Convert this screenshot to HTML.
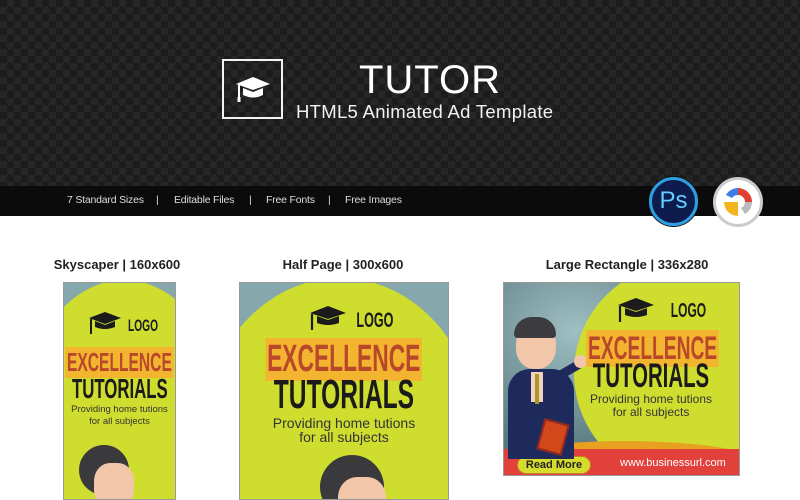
<!DOCTYPE html>
<html><head><meta charset="utf-8"><style>
*{margin:0;padding:0;box-sizing:border-box}
html,body{width:800px;height:500px;overflow:hidden}
body{background:#fff;font-family:"Liberation Sans",sans-serif;position:relative}
.abs{position:absolute}
.hdr{left:0;top:0;width:800px;height:186px;background-color:#1c1c1c;
background-image:linear-gradient(45deg,#262626 25%,transparent 25%,transparent 75%,#262626 75%),linear-gradient(45deg,#262626 25%,transparent 25%,transparent 75%,#262626 75%);
background-size:14px 14px;background-position:0 0,7px 7px}
.bar{left:0;top:186px;width:800px;height:30px;background:#0b0b0b}
.bar span{position:absolute;top:8px;color:#ddd;font-size:10.5px;white-space:nowrap;letter-spacing:-0.2px}
.lbl{top:257px;font-size:13px;font-weight:bold;color:#222;text-align:center;white-space:nowrap}
.t{position:absolute;text-align:center;white-space:nowrap;left:-100px;width:calc(100% + 200px)}
.c{font-weight:bold}
.c>span{display:inline-block;transform:scaleX(0.6);transform-origin:center}
.exc{color:#b9482b}
.exc>span{background:#f3b52f;padding:0 3px}
.tut{color:#1b1b1b}
.pr{color:#333}
</style></head><body>
<div class="abs hdr"></div>
<div class="abs" style="left:222px;top:59px;width:61px;height:60px;border:2px solid #f2f2f2"></div>
<svg class="abs" style="left:234px;top:74px" width="38" height="30" viewBox="0 0 38 30">
<path d="M19 3 L36 10 L19 16 L2 10 Z" fill="#fff"/><path d="M9 14 L9 21 Q19 26 29 21 L29 14 L19 18 Z" fill="#fff"/><path d="M5 11 L5 25" stroke="#fff" stroke-width="2"/><rect x="3.5" y="23" width="3" height="5" fill="#fff"/></svg>
<div class="abs" style="left:300px;top:58px;width:260px;text-align:center;color:#fff;font-size:40px;letter-spacing:1px">TUTOR</div>
<div class="abs" style="left:296px;top:101px;color:#f2f2f2;font-size:18.5px;white-space:nowrap;letter-spacing:0.3px">HTML5 Animated Ad Template</div>
<div class="abs bar"><span style="left:67px">7 Standard Sizes</span><span style="left:156px">|</span><span style="left:174px">Editable Files</span><span style="left:249px">|</span><span style="left:266px">Free Fonts</span><span style="left:328px">|</span><span style="left:345px">Free Images</span></div>
<div class="abs" style="left:649px;top:177px;width:49px;height:49px;border-radius:50%;background:#0e1b4d;border:3px solid #2e9fe0;box-shadow:0 0 0 1px #111;color:#5fd0ff;font-size:24px;line-height:42px;text-align:center">Ps</div>
<div class="abs" style="left:713px;top:177px;width:50px;height:50px;border-radius:50%;background:#fff;border:3px solid #ccc"></div>
<svg class="abs" style="left:721px;top:185px" width="34" height="34" viewBox="0 0 34 34">
<path d="M17 3 A14 14 0 0 1 31 17 L24 17 A7 7 0 0 0 17 10 Z" fill="#e04030"/>
<path d="M17 3 A14 14 0 0 0 5 10 L11 13 A7 7 0 0 1 17 10 Z" fill="#3a7ee8"/>
<path d="M3 17 L17 17 L17 31 A14 14 0 0 1 3 17 Z" fill="#f2b51e"/>
<path d="M31 17 A14 14 0 0 1 24 29 L20 23 A7 7 0 0 0 24 17 Z" fill="#bbb"/></svg>

<div class="abs lbl" style="left:17px;width:200px">Skyscaper | 160x600</div>
<div class="abs lbl" style="left:243px;width:200px">Half Page | 300x600</div>
<div class="abs lbl" style="left:527px;width:200px">Large Rectangle | 336x280</div>

<!-- skyscraper -->
<div class="abs" style="left:63px;top:282px;width:113px;height:218px;background:#86a7ac;border:1px solid #999;overflow:hidden">
<div class="abs" style="left:-45px;top:-3px;width:210px;height:300px;border-radius:50%;background:#cfdd2f"></div>
<svg class="abs" style="left:23px;top:28px" width="36" height="26" viewBox="0 0 36 26"><path d="M18 1 L34 7 L18 13 L2 7 Z" fill="#1b1b1b"/><path d="M8 10 L8 16 Q18 20 28 16 L28 10 L18 14 Z" fill="#1b1b1b"/><path d="M4 8 L4 23" stroke="#1b1b1b" stroke-width="2"/></svg>
<div class="abs c" style="left:54px;top:33px;font-size:17px;color:#1b1b1b"><span>LOGO</span></div>
<div class="t c exc" style="top:64px;font-size:26px"><span>EXCELLENCE</span></div>
<div class="t c tut" style="top:90px;font-size:28px"><span>TUTORIALS</span></div>
<div class="t pr" style="top:121px;font-size:9.5px;line-height:12px">Providing home tutions<br>for all subjects</div>
<div class="abs" style="left:15px;top:162px;width:50px;height:50px;border-radius:50%;background:#3a3a3c"></div>
<div class="abs" style="left:30px;top:180px;width:40px;height:45px;border-radius:40%;background:#f2c6a8"></div>
</div>

<!-- half page -->
<div class="abs" style="left:239px;top:282px;width:210px;height:218px;background:#86a7ac;border:1px solid #999;overflow:hidden">
<div class="abs" style="left:-40px;top:-5px;width:280px;height:330px;border-radius:50%;background:#cfdd2f"></div>
<svg class="abs" style="left:68px;top:22px" width="40" height="28" viewBox="0 0 40 28"><path d="M20 1 L38 8 L20 14 L2 8 Z" fill="#1b1b1b"/><path d="M9 11 L9 18 Q20 22 31 18 L31 11 L20 15 Z" fill="#1b1b1b"/><path d="M4 9 L4 25" stroke="#1b1b1b" stroke-width="2.2"/></svg>
<div class="abs c" style="left:104px;top:26px;font-size:21px;color:#1b1b1b"><span>LOGO</span></div>
<div class="t c exc" style="top:55px;font-size:38px"><span>EXCELLENCE</span></div>
<div class="t c tut" style="top:88px;font-size:41px"><span>TUTORIALS</span></div>
<div class="t pr" style="top:133px;font-size:14px;line-height:14px">Providing home tutions<br>for all subjects</div>
<div class="abs" style="left:80px;top:172px;width:64px;height:64px;border-radius:50%;background:#3a3a3c"></div>
<div class="abs" style="left:98px;top:194px;width:48px;height:50px;border-radius:40%;background:#f2c6a8"></div>
</div>

<!-- large rect -->
<div class="abs" style="left:503px;top:282px;width:237px;height:194px;background:radial-gradient(ellipse at 30% 25%,#9fbfc2,#4d6e74 70%,#3b5a60);border:1px solid #999;overflow:hidden">
<div class="abs" style="left:70px;top:-20px;width:220px;height:220px;border-radius:50%;background:#cfdd2f"></div>
<div class="abs" style="left:-20px;top:158px;width:280px;height:60px;background:#e8a020;border-radius:50% 50% 0 0/40% 40% 0 0"></div>
<div class="abs" style="left:0;top:166px;width:237px;height:30px;background:#e2403a"></div>
<div class="abs" style="left:13px;top:173px;width:74px;height:18px;border-radius:9px;background:#d6dc2c;border:1px solid #c9802a;font-size:11px;font-weight:bold;color:#222;text-align:center;line-height:16px">Read More</div>
<div class="abs" style="left:116px;top:174px;font-size:11px;color:#fff">www.businessurl.com</div>
<div class="abs" style="left:4px;top:86px;width:66px;height:90px;border-radius:22px 22px 0 0;background:#1f2a5c"></div>
<div class="abs" style="left:27px;top:89px;width:12px;height:30px;background:#f5d0c0"></div>
<div class="abs" style="left:31px;top:91px;width:4px;height:30px;background:#a89a20"></div>
<div class="abs" style="left:12px;top:40px;width:40px;height:46px;border-radius:45%;background:#f2c6a8"></div>
<div class="abs" style="left:10px;top:34px;width:42px;height:21px;border-radius:20px 20px 4px 4px;background:#3c3c40"></div>
<div class="abs" style="left:55px;top:82px;width:22px;height:9px;background:#1f2a5c;transform:rotate(-30deg)"></div>
<div class="abs" style="left:70px;top:72px;width:13px;height:13px;border-radius:50%;background:#f2c6a8"></div>
<div class="abs" style="left:36px;top:138px;width:26px;height:32px;background:#d5481c;transform:rotate(15deg);border:2px solid #8e2a20"></div>
<svg class="abs" style="left:112px;top:14px" width="40" height="28" viewBox="0 0 40 28"><path d="M20 1 L38 8 L20 14 L2 8 Z" fill="#1b1b1b"/><path d="M9 11 L9 18 Q20 22 31 18 L31 11 L20 15 Z" fill="#1b1b1b"/><path d="M4 9 L4 25" stroke="#1b1b1b" stroke-width="2.2"/></svg>
<div class="abs c" style="left:155px;top:17px;font-size:20px;color:#1b1b1b"><span>LOGO</span></div>
<div class="abs c exc" style="left:38px;top:47px;width:200px;text-align:center;font-size:32px;white-space:nowrap"><span>EXCELLENCE</span></div>
<div class="abs c tut" style="left:47px;top:74px;width:200px;text-align:center;font-size:34px;white-space:nowrap"><span>TUTORIALS</span></div>
<div class="abs pr" style="left:82px;top:110px;width:130px;text-align:center;font-size:12px;line-height:13px;white-space:nowrap">Providing home tutions<br>for all subjects</div>
</div>
</body></html>
